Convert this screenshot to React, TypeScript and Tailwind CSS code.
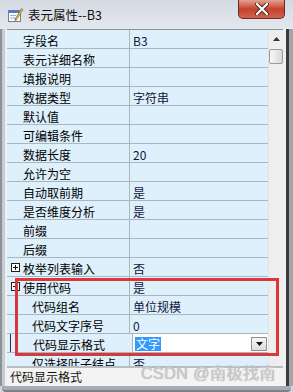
import { ReactNode } from "react";

type Row = { name: string; value?: string; indent?: boolean; toggle?: "plus" | "minus"; selected?: boolean };

const rows: Row[] = [
  { name: "字段名", value: "B3" },
  { name: "表元详细名称" },
  { name: "填报说明" },
  { name: "数据类型", value: "字符串" },
  { name: "默认值" },
  { name: "可编辑条件" },
  { name: "数据长度", value: "20" },
  { name: "允许为空" },
  { name: "自动取前期", value: "是" },
  { name: "是否维度分析", value: "是" },
  { name: "前缀" },
  { name: "后缀" },
  { name: "枚举列表输入", value: "否", toggle: "plus" },
  { name: "使用代码", value: "是", toggle: "minus" },
  { name: "代码组名", value: "单位规模", indent: true },
  { name: "代码文字序号", value: "0", indent: true },
  { name: "代码显示格式", value: "文字", indent: true, selected: true },
  { name: "仅选择叶子结点", value: "否", indent: true },
];

const font = "font-['SimSun','Noto_Sans_CJK_SC',sans-serif]";

const Toggle = ({ kind }: { kind: "plus" | "minus" }) => (
  <span className="absolute left-[4px] top-[5px] w-[9px] h-[9px] border border-[#222] bg-white flex items-center justify-center">
    <span className="absolute w-[5px] h-px bg-[#111]" />
    {kind === "plus" && <span className="absolute w-px h-[5px] bg-[#111]" />}
  </span>
);

const AppIcon = () => (
  <svg width="17" height="17" viewBox="0 0 17 17">
    <rect x="1.5" y="4.5" width="12" height="11" fill="#fdfdfd" stroke="#6f7f99" />
    <rect x="1.5" y="4.5" width="12" height="2.5" fill="#4d7fc9" />
    <line x1="3" y1="9.5" x2="9" y2="9.5" stroke="#9bb0cc" />
    <line x1="3" y1="12" x2="8" y2="12" stroke="#9bb0cc" />
    <path d="M8 13 L14.5 2.5 L16 3.5 L9.5 14 Z" fill="#e9b54a" stroke="#8a5d1c" strokeWidth="0.6" />
    <path d="M8 13 L9.5 14 L7.6 14.8 Z" fill="#333" />
  </svg>
);

const Cell = ({ children, className }: { children?: ReactNode; className?: string }) => (
  <div className={className}>{children}</div>
);

export default function App() {
  return (
    <div className={`w-[293px] h-[392px] relative overflow-hidden bg-[#cfd7df] ${font} text-[12px] leading-none`}>
      {/* title bar */}
      <div className="h-[29px] flex items-start bg-gradient-to-b from-[#d3dae2] to-[#e3e8ed] relative">
        <div className="pl-[7px] pt-[6px] flex items-center gap-[4px]">
          <AppIcon />
          <span className="text-[12.5px] text-[#111] pt-[1px]">表元属性--B3</span>
        </div>
        <div className="absolute left-[238px] top-0 w-[47px] h-[19px] rounded-b-[5px] border border-t-0 border-[#6d2a20] bg-gradient-to-b from-[#e4a092] via-[#c4412e] to-[#d0634c] flex items-center justify-center">
          <svg width="14" height="12" viewBox="0 0 14 12">
            <path d="M2 1 L12 11 M12 1 L2 11" stroke="#4a2a24" strokeWidth="4" strokeLinecap="round" />
            <path d="M2 1 L12 11 M12 1 L2 11" stroke="#ffffff" strokeWidth="2.2" strokeLinecap="round" />
          </svg>
        </div>
      </div>

      {/* body */}
      <div className="flex h-[357px]">
        <div className="w-[7px] flex">
          <div className="w-[2px] bg-[#8d9297]" />
          <div className="w-[3px] bg-[#c5cbd0]" />
          <div className="w-[2px] bg-[#eef0f2]" />
        </div>

        <div className="w-[276px] flex flex-col">
          {/* grid */}
          <div className="h-[337px] flex border-t border-[#8c939a] overflow-hidden">
            <div className="w-[261px] bg-[#def0fb] overflow-hidden">
              {rows.map((r) => (
                <div key={r.name} className="h-[19px] flex border-b border-[#aab6be] text-[#000]">
                  <Cell className={`w-[123px] shrink-0 relative border-r border-[#aab6be] ${r.selected ? "border-l border-l-[#333] ml-[3px] w-[120px]" : ""}`}>
                    {r.toggle && <Toggle kind={r.toggle} />}
                    <span className={`absolute top-[5px] ${r.indent ? (r.selected ? "left-[22px]" : "left-[25px]") : "left-[16px]"}`}>{r.name}</span>
                  </Cell>
                  <Cell className={`flex-1 relative ${r.selected ? "bg-white" : ""}`}>
                    {r.selected ? (
                      <>
                        <span className="absolute left-[2px] top-[3px] h-[14px] px-px bg-[#3399ff] text-white flex items-center">{r.value}</span>
                        <div className="absolute right-[1px] top-[3px] w-[16px] h-[14px] border border-[#8f8f8f] bg-gradient-to-b from-[#f6f6f6] to-[#dcdcdc] flex items-center justify-center">
                          <svg width="7" height="4" viewBox="0 0 7 4"><path d="M0 0 H7 L3.5 4 Z" fill="#111" /></svg>
                        </div>
                      </>
                    ) : (
                      <span className="absolute left-[3px] top-[5px] text-[#15153d]">{r.value}</span>
                    )}
                  </Cell>
                </div>
              ))}
            </div>
            {/* scrollbar */}
            <div className="w-[15px] bg-[#eeeeee] flex flex-col items-center border-l border-[#e4e4e4]">
              <div className="h-[18px] w-full flex items-center justify-center">
                <svg width="7" height="4" viewBox="0 0 7 4"><path d="M0 4 H7 L3.5 0 Z" fill="#333" /></svg>
              </div>
              <div className="mt-[1px] w-[14px] h-[15px] rounded-[2px] border border-[#9a9a9a] bg-gradient-to-r from-[#f8f8f8] to-[#d9d9d9]" />
            </div>
          </div>
          {/* description */}
          <div className="h-[20px] border-t-2 border-[#b9bec3] bg-[#f3f3f3] flex items-center pl-[3px] text-[#111]">
            代码显示格式
          </div>
        </div>

        <div className="w-[10px] flex">
          <div className="w-[3px] bg-[#f0f0f0]" />
          <div className="w-[3px] bg-[#3c3c3c]" />
          <div className="w-[4px] bg-[#a3a6a9]" />
        </div>
      </div>

      {/* bottom frame */}
      <div className="h-[6px] mx-[2px] rounded-b-[4px] bg-[#a9adb1] border-b-2 border-[#7d8185]" />

      {/* annotation box */}
      <div className="absolute left-[15px] top-[278px] w-[264px] h-[78px] border-[3px] border-[#d9383a]" />

      {/* watermark */}
      <span className="absolute left-[141px] top-[366px] text-[16px] text-[#cdcdcd] [text-shadow:0_0_1px_#9a9a9a] font-['Liberation_Sans','Noto_Sans_CJK_SC',sans-serif] tracking-[0.5px]">CSDN @南极找南</span>
    </div>
  );
}
